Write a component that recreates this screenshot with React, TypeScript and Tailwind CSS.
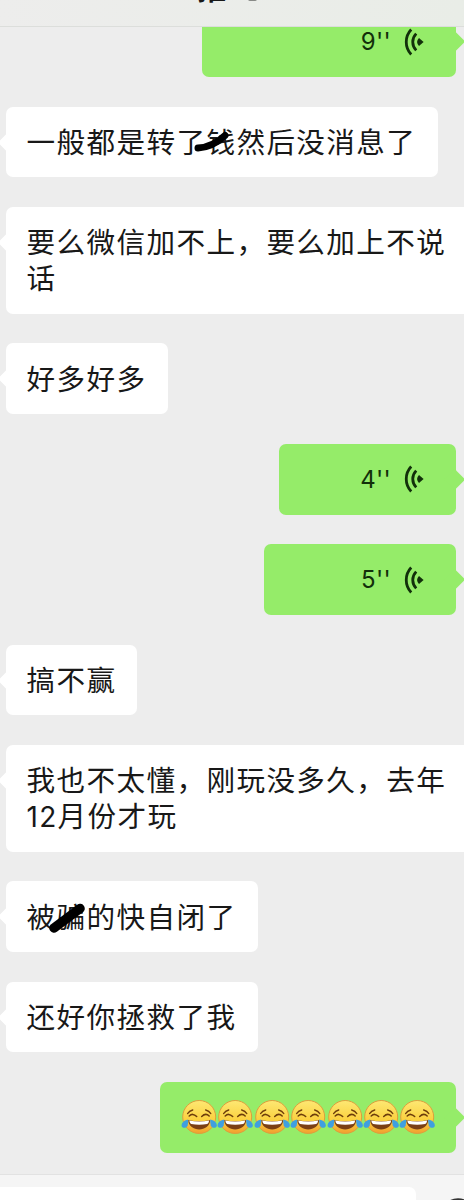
import type { ReactNode } from "react";

type Message = {
  id: number;
  kind: "text" | "voice" | "emoji";
  content: ReactNode;
  width: string;
};

const messages: Message[] = [
  { id: 1, kind: "voice", content: "9''", width: "w-[254px]" },
  {
    id: 2,
    kind: "text",
    content: (
      <>
        一般都是转了<Struck flat>钱</Struck>然后没消息了
      </>
    ),
    width: "w-[432px]",
  },
  {
    id: 3,
    kind: "text",
    content: (
      <>
        要么微信加不上，要么加上不说
        <br />话
      </>
    ),
    width: "w-[470px]",
  },
  { id: 4, kind: "text", content: "好多好多", width: "w-[162px]" },
  { id: 5, kind: "voice", content: "4''", width: "w-[177px]" },
  { id: 6, kind: "voice", content: "5''", width: "w-[192px]" },
  { id: 7, kind: "text", content: "搞不赢", width: "w-[131px]" },
  {
    id: 8,
    kind: "text",
    content: (
      <>
        我也不太懂，刚玩没多久，去年
        <br />
        <span className="font-['Inter'] text-[28px] leading-none tracking-[1.2px]">
          12
        </span>
        月份才玩
      </>
    ),
    width: "w-[470px]",
  },
  {
    id: 9,
    kind: "text",
    content: (
      <>
        被<Struck>骗</Struck>的快自闭了
      </>
    ),
    width: "w-[252px]",
  },
  { id: 10, kind: "text", content: "还好你拯救了我", width: "w-[252px]" },
  { id: 11, kind: "emoji", content: null, width: "w-[296px]" },
];

function Struck({ children, flat }: { children: ReactNode; flat?: boolean }) {
  return (
    <span className="relative">
      {children}
      {flat ? (
        <svg
          className="absolute top-[6px] -left-[12px] h-[28px] w-[40px]"
          viewBox="0 0 40 28"
          fill="none"
        >
          <path
            d="M4 22C14 21.500 23 17 31 9.500"
            stroke="#000"
            strokeWidth="7"
            strokeLinecap="round"
          />
        </svg>
      ) : (
        <svg
          className="absolute top-[4px] -left-[8px] h-[36px] w-[40px]"
          viewBox="0 0 40 36"
          fill="none"
        >
          <path
            d="M5 29L31 9.500"
            stroke="#000"
            strokeWidth="9.5"
            strokeLinecap="round"
          />
        </svg>
      )}
    </span>
  );
}

const VoiceIcon = () => (
  <svg
    className="h-[28px] w-[22px]"
    viewBox="0 0 22 28"
    fill="none"
    stroke="#12300a"
    strokeWidth="2.8"
  >
    <path d="M8.200 1.500C1.600 8.500 1.600 19.500 8.200 26.500" />
    <path d="M13.200 5.600C8.600 10.500 8.600 17.500 13.200 22.400" />
    <path
      d="M16 10L20.600 14L16 18C13.400 15.500 13.400 12.500 16 10Z"
      fill="#12300a"
      stroke="none"
    />
  </svg>
);

const JoyFace = () => (
  <svg className="h-[36px] w-[36.4px] shrink-0" viewBox="0 0 36 36">
    <circle cx="18" cy="18" r="16.5" fill="url(#face)" stroke="#dc9f3c" />
    <path
      d="M8 17Q11.500 13.500 15.500 17.500M20.500 17.500Q24.500 13.500 28 17M6.500 14.500Q8 11.800 11.500 11M24.500 11Q28 11.800 29.500 14.500"
      fill="none"
      stroke="#6d3d0b"
      strokeWidth="1.5"
      strokeLinecap="round"
    />
    <path d="M7 21Q18 23.500 29 21C28.500 33.500 7.500 33.500 7 21Z" fill="#7b3f14" />
    <path
      d="M8 21.500Q18 23.500 28 21.500Q27.500 24.500 26 25Q18 26.500 10 25Q8.500 24.500 8 21.500Z"
      fill="#fff"
    />
    <path
      d="M7 20.500C2 21.500 .2 24.500 .4 26.700C.8 29.800 5.500 29.400 6.500 26.200Q7.200 23.500 7 20.500Z"
      fill="#3f9fe0"
    />
    <path
      d="M29 20.500C34 21.500 35.800 24.500 35.600 26.700C35.200 29.800 30.500 29.400 29.500 26.200Q28.800 23.500 29 20.500Z"
      fill="#3f9fe0"
    />
  </svg>
);

const Bubble = ({ message }: { message: Message }) => {
  const { kind, content, width } = message;

  if (kind === "text") {
    return (
      <div
        className={`relative ml-[6px] shrink-0 rounded-[7px] bg-white pt-[16.3px] pb-[18.2px] pl-[20.6px] text-[28.6px] leading-[36.3px] tracking-[1.38px] whitespace-nowrap text-[#181818] ${width}`}
      >
        <span className="absolute top-[28px] -left-[5px] size-[15px] rotate-45 rounded-[2px] bg-white" />
        {content}
      </div>
    );
  }

  return (
    <div
      className={`relative mr-[8px] flex h-[70.9px] shrink-0 items-center self-end rounded-[7px] bg-[#95ec69] ${width}`}
    >
      <span className="absolute top-[28px] -right-[6px] size-[15px] rotate-45 rounded-[2px] bg-[#95ec69]" />
      {kind === "voice" ? (
        <div className="ml-auto flex items-center pr-[31px] text-[#12300a]">
          <span className="mr-[12px] pt-[1px] font-['Inter'] text-[24px] tracking-[0.3px]">
            {content}
          </span>
          <VoiceIcon />
        </div>
      ) : (
        <div className="flex pl-[21px]">
          {Array.from({ length: 7 }, (_, i) => (
            <JoyFace key={i} />
          ))}
        </div>
      )}
    </div>
  );
};

const App = () => {
  return (
    <div className="flex h-[1200px] w-[464px] flex-col overflow-hidden bg-[#ededed] font-['Noto_Sans_CJK_SC',sans-serif]">
      <svg className="absolute size-0">
        <defs>
          <linearGradient id="face" x1="0" y1="0" x2="0" y2="1">
            <stop offset="0" stopColor="#fde873" />
            <stop offset="0.6" stopColor="#fbd03e" />
            <stop offset="1" stopColor="#f0a030" />
          </linearGradient>
        </defs>
      </svg>
      <header className="relative z-10 h-[27px] shrink-0 overflow-hidden border-b border-[#dcdedb] bg-linear-to-r from-[#ededec] to-[#e9ede7]">
        <span className="absolute -top-[31px] left-[197px] text-[29px] leading-[36px] font-bold whitespace-nowrap text-[#181818]">
          推
        </span>
        <span className="absolute -top-[3px] left-[248px] h-[4px] w-[9px] rounded-full bg-[#888a87]" />
      </header>
      <main className="-mt-[20.8px] flex min-h-0 flex-1 flex-col gap-[29.5px] overflow-hidden">
        {messages.map((message) => (
          <Bubble key={message.id} message={message} />
        ))}
      </main>
      <footer className="flex h-[26px] shrink-0 items-end justify-between overflow-hidden border-t border-[#e2e2e2] bg-[#f5f5f5]">
        <div className="h-[13px] w-[416px] rounded-tr-[7px] bg-white" />
        <svg className="mr-[-2px] h-[3px] w-[18px]" viewBox="0 0 18 3" fill="none">
          <circle cx="10" cy="19" r="16.500" stroke="#333" strokeWidth="2.500" />
        </svg>
      </footer>
    </div>
  );
};

export default App;
